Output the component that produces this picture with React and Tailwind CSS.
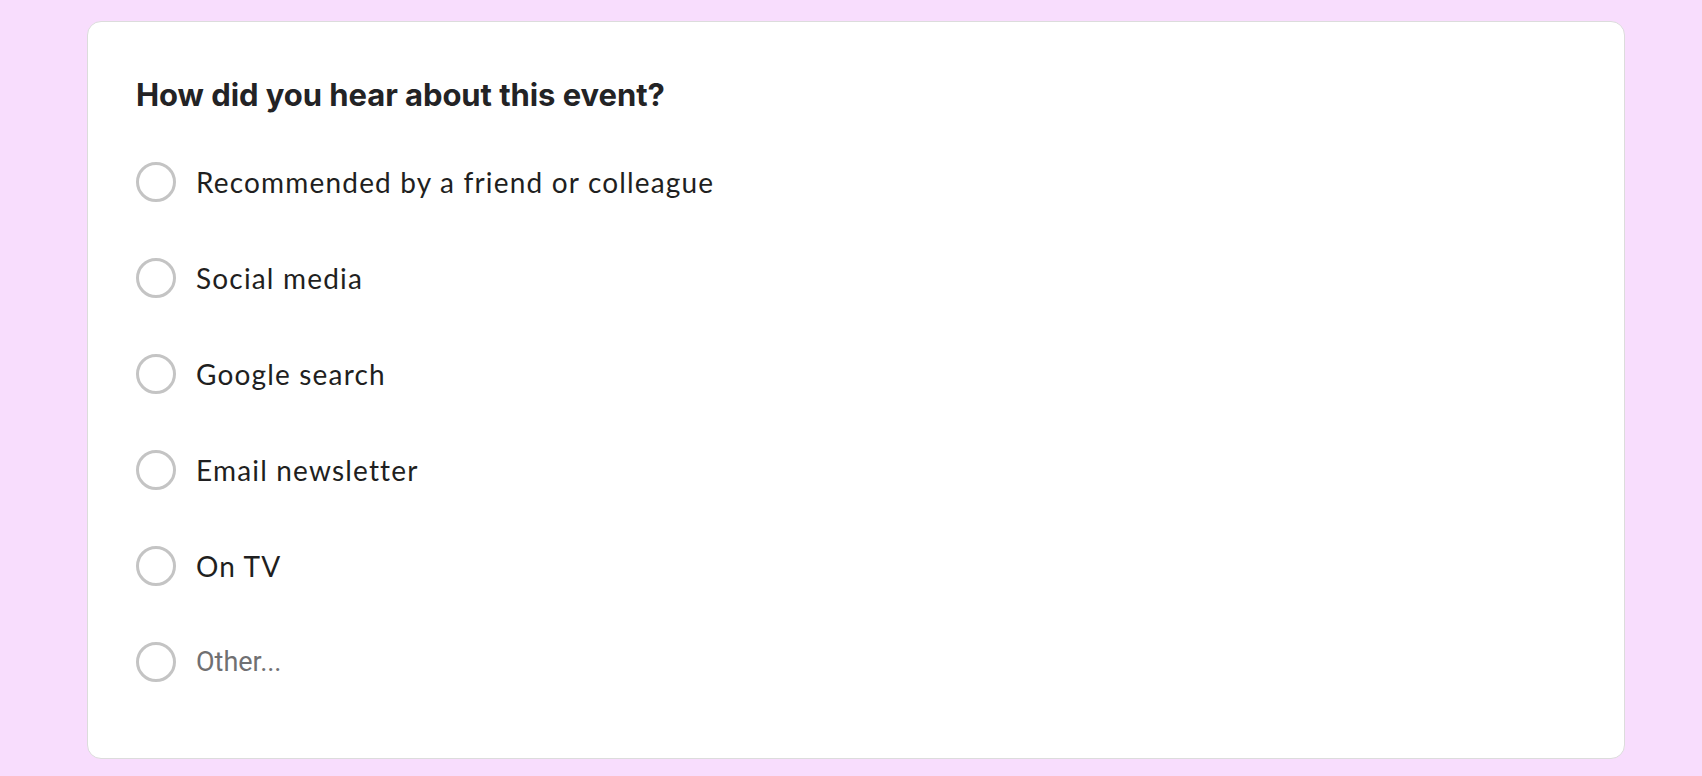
import React from "react";

const options = [
  "Recommended by a friend or colleague",
  "Social media",
  "Google search",
  "Email newsletter",
  "On TV",
];

export default function App() {
  return (
    <div className="min-h-screen w-full bg-[#f8ddfd] pt-[21px] pb-[17px]">
      <div className="ml-[87px] w-[1538px] h-[738px] rounded-[14px] border border-[#dcdcdc] bg-white pl-[48px] pt-[53px]">
        <h2
          className="text-[31px] font-bold leading-[40px] tracking-[-0.002em] text-[#232325]"
          style={{ fontFamily: "Inter, 'Noto Sans', sans-serif" }}
        >
          How did you hear about this event?
        </h2>
        <div className="mt-[47px] flex flex-col gap-[56px]">
          {options.map((o) => (
            <label key={o} className="flex items-center h-[40px] gap-[20px] cursor-pointer">
              <span className="box-border w-[40px] h-[40px] rounded-full border-[3px] border-[#c4c4c4] shrink-0" />
              <span
                className="text-[28px] leading-[40px] tracking-[0.042em] text-[#1f1f21]"
                style={{ fontFamily: "Lato, 'Noto Sans', sans-serif" }}
              >
                {o}
              </span>
            </label>
          ))}
          <label className="flex items-center h-[40px] gap-[20px] cursor-pointer">
            <span className="box-border w-[40px] h-[40px] rounded-full border-[3px] border-[#c4c4c4] shrink-0" />
            <span
              className="text-[27px] leading-[40px] text-[#707072]"
              style={{ fontFamily: "Roboto, sans-serif" }}
            >
              Other...
            </span>
          </label>
        </div>
      </div>
    </div>
  );
}
